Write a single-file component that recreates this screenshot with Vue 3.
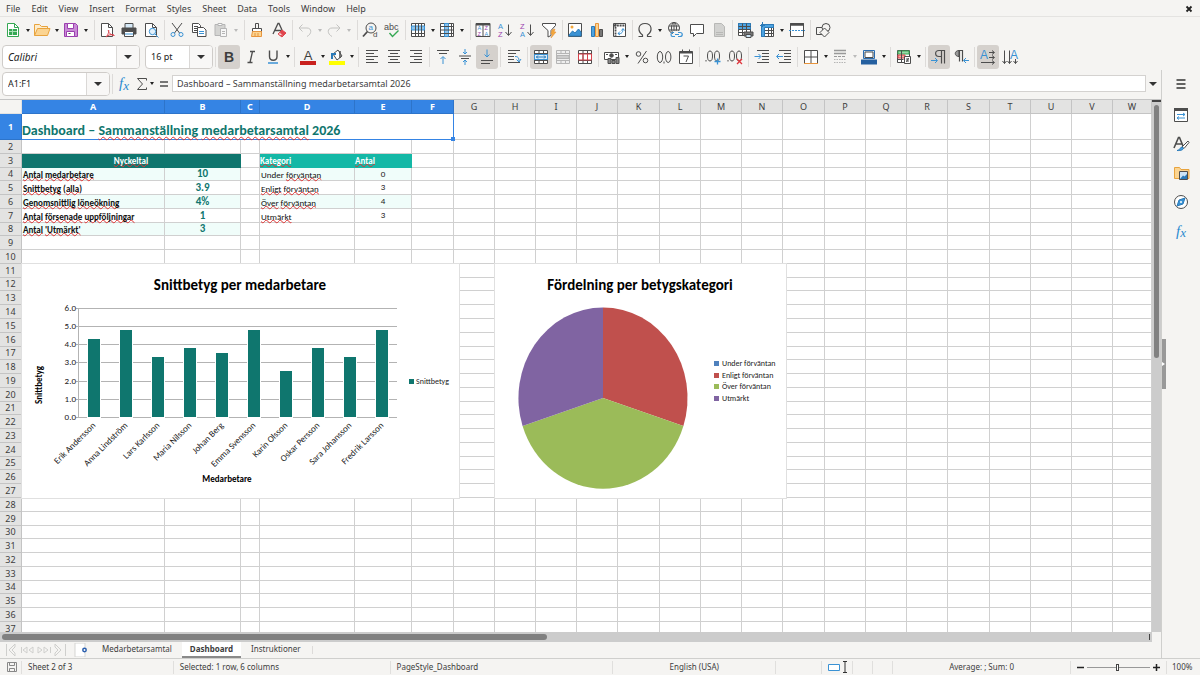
<script setup>
const menus = ['File', 'Edit', 'View', 'Insert', 'Format', 'Styles', 'Sheet', 'Data', 'Tools', 'Window', 'Help']

const art = {
  new: '<path d="M3.500 2.500h7l4 4v9h-11z" fill="#fff" stroke="#35a853"/><path d="M10.500 2.500v4h4" stroke="#35a853"/><path d="M5 8h8v6H5z" fill="#35a853" stroke="none"/><path d="M5 10.500h8M8.500 8v6" stroke="#a9dfb6"/>',
  open: '<path d="M1.500 14.500v-11h5l2 2h6v3" fill="#fdeccb" stroke="#e8a33d"/><path d="M1.500 14.500l3-7h12.500l-2.500 7z" fill="#fbd491" stroke="#e8a33d"/>',
  save: '<path d="M2.500 2.500h11l2 2v11h-13z" fill="#c98bd6" stroke="#9b3fae"/><path d="M5.500 2.500h6v5h-6zM4.500 10.500h8v5h-8z" fill="#fff" stroke="#9b3fae"/><path d="M6.500 12.500h2"/>',
  pdf: '<path d="M3.500 2.500h7l4 4v9h-11z" fill="#fff"/><path d="M10.500 2.500v4h4"/><path d="M8 16c3-3 3-7 2.500-7s0 5 6 5.500M8 16c2-2 5-3 8-2" stroke="#d8404a"/>',
  print: '<path d="M5 2.500h8v5H5z" fill="#d6e9f7"/><path d="M2 7h14v6H2z" fill="#4d4d4d"/><path d="M4.500 10.500h9v5h-9z" fill="#fff"/><path d="M5 13h8" stroke="#3a92d4"/>',
  preview: '<path d="M3.500 2.500h7l4 4v9h-11z" fill="#fff"/><path d="M10.500 2.500v4h4"/><circle cx="10.500" cy="10.500" r="3.200" fill="#e3f1fb" stroke="#3a92d4"/><path d="M13 13l3.500 3.500" stroke="#3a92d4"/>',
  cut: '<path d="M4 2l7.500 10M14 2L6.500 12"/><circle cx="5" cy="13.500" r="2" stroke="#3a92d4"/><circle cx="13" cy="13.500" r="2" stroke="#3a92d4"/>',
  copy: '<path d="M2.500 2.500h6l2 2v7h-8z" fill="#fff"/><path d="M4 5.500h4M4 7.500h3M4 9.500h3"/><path d="M7.500 6.500h6l2.500 2.500v6.500H7.500z" fill="#fff"/><path d="M9 10.500h5M9 12.500h5" stroke="#3a92d4"/>',
  paste: '<path d="M3 3.500h10v11H3z" fill="#d4d4d2" stroke="#b5b5b5"/><path d="M6 2.500h4v2H6z" fill="#fff" stroke="#b5b5b5"/><path d="M8.500 7.500h6v8h-6z" fill="#f7f7f7" stroke="#b5b5b5"/><path d="M10 10.500h3M10 12.500h3" stroke="#b5b5b5"/>',
  clone: '<path d="M7.500 2.500h3v5h-3z"/><path d="M4.500 7.500h9v3h-9z" fill="#fff"/><path d="M4.500 10.500l-1 5h10v-5z" fill="#fbd491" stroke="#e8953d"/><path d="M7 12v3M10 12v3" stroke="#e8953d"/>',
  clear: '<path d="M3 13L8 2.500h1L12 9M5 9.500h6" stroke-width="1.300"/><path d="M8 13l4-4 4 3-4 4z" fill="#e0454d" stroke="#e0454d"/><path d="M8 13l2-1.500 3 3" fill="#fff" stroke="#e0454d"/>',
  undo: '<path d="M6.500 3.500L3 7l3.500 3.500M3 7h8c5 0 5 6 0 8.500" stroke="#c3c3c1"/>',
  redo: '<path d="M11.500 3.500L15 7l-3.500 3.500M15 7H7c-5 0-5 6 0 8.500" stroke="#c3c3c1"/>',
  find: '<circle cx="10" cy="7" r="5"/><path d="M6.500 10.500L2 15.500" stroke-width="1.800"/><text x="7.500" y="9" font-size="8" fill="#3a92d4">a</text><text x="12" y="16" font-size="8" fill="#4d4d4d">d</text>',
  spell: '<text x="1" y="8.500" font-size="9" fill="#4d4d4d">abc</text><path d="M6.500 12l3 3.500 6-6" stroke="#35a853" stroke-width="1.400"/>',
  row: '<path d="M2.500 2.500h13v13h-13z" fill="#fff"/><path d="M2.500 5h13v4h-13z" fill="#8cc4ee" stroke="#3a92d4"/><path d="M2.500 12.500h13M6.500 2.500v13M9.500 2.500v13M12.500 2.500v13"/>',
  col: '<path d="M2.500 2.500h13v13h-13z" fill="#fff"/><path d="M6.500 2.500h4v13h-4z" fill="#8cc4ee" stroke="#3a92d4"/><path d="M2.500 5.500h13M2.500 9h13M2.500 12.500h13M13.500 2.500v13"/>',
  sort: '<path d="M2 2.500h14v13H2zM9 4v12" fill="#fff"/><path d="M2 3.500h14" stroke-width="2"/><g font-size="5.500" stroke="none"><text x="3.500" y="9" fill="#3a92d4">A</text><text x="3.500" y="15" fill="#9b3fae">Z</text><text x="10.500" y="9" fill="#9b3fae">Z</text><text x="10.500" y="15" fill="#3a92d4">A</text></g>',
  az: '<g font-size="7.500" stroke="none"><text x="2" y="7.500" fill="#3a92d4">A</text><text x="2" y="16" fill="#9b3fae">Z</text></g><path d="M12.500 3.500v10.500M9.500 11l3 3.500 3-3.500"/>',
  za: '<g font-size="7.500" stroke="none"><text x="2" y="7.500" fill="#9b3fae">Z</text><text x="2" y="16" fill="#3a92d4">A</text></g><path d="M12.500 3.500v10.500M9.500 11l3 3.500 3-3.500"/>',
  filter: '<path d="M2.500 2.500h13v2L11 9.500v5l-3 1.500V9.500l-5.500-5z" fill="#fff"/><path d="M12 9l3-1-1 3h2l-5 6 1.500-4H11z" fill="#f3a83c" stroke="#e8953d" stroke-width=".6"/>',
  image: '<path d="M2.500 2.500h13v13h-13z" fill="#fff"/><circle cx="6" cy="6" r="1.500" fill="#f3a83c" stroke="none"/><path d="M3 14l3.500-4 2.500 2 3.500-4 2.500 3v4H3z" fill="#3a92d4" stroke="#2b7ab8"/>',
  chart: '<path d="M3.500 5.500h3v10h-3z" fill="#4ea3e0" stroke="#2b7ab8"/><path d="M7.500 2.500h3v13h-3z" fill="#fbd491" stroke="#e8953d"/><path d="M11.500 8.500h3v7h-3z" fill="#777"/>',
  pivot: '<path d="M3.500 2.500h12v13h-12z" fill="#fff"/><path d="M4 4.500h11M5.500 3v12" stroke-width="1.800" stroke-dasharray="2 .8"/><path d="M8 12.500c4 1 5-2 5-4.500M10 10.500l-2 2 2 1.500M11.500 9.500L13 7.500l1.500 2" stroke="#3a92d4"/>',
  omega: '<path d="M2.500 15.500h4v-1.500C1 10 2 2.500 9 2.500S17 10 11.500 14v1.500h4" stroke-width="1.200"/>',
  link: '<circle cx="8" cy="7" r="5.500"/><ellipse cx="8" cy="7" rx="2.500" ry="5.500"/><path d="M3 5h10M3 9h10M8 2v10"/><path d="M7 10h9v7H7z" fill="#f5f4f2" stroke="none"/><path d="M8 11.500H6.500c-2 0-2 4 0 4H9M12 11.500h2c3 0 3 4 0 4h-2M9 13.500h4" stroke="#3a92d4" stroke-width="1.200"/>',
  comment: '<path d="M2.500 3.500h13v9h-7l-3 3v-3h-3z" fill="#fff"/>',
  header: '<path d="M4.500 2.500h7l3 3v10h-10z" fill="#d2d2d0" stroke="#b8b8b6"/><path d="M6 11.500h7M6 13.500h7" stroke="#b8b8b6"/>',
  prange: '<path d="M2.500 2.500h12v12h-12z" fill="#fff"/><path d="M2.500 2.500h12v6h-12z" fill="#4ea3e0" stroke="#2b7ab8"/><path d="M2.500 5.500h12M2.500 8.500h12M2.500 11.500h12M6.500 2.500v12M10.500 2.500v12"/><path d="M8 11h9v4H8z" fill="#777"/><path d="M10 13.500h5v3h-5z" fill="#cde4f5"/>',
  freeze: '<path d="M3.500 3.500h12v12h-12z" fill="#fff"/><path d="M3.500 6.500v9h3v-9h9v-3h-12z" fill="#4ea3e0" stroke="#2b7ab8"/><path d="M7 9.500h8M7 12.500h8M10.500 7v8M13.500 7v8"/><path d="M4.500 1v5M2 4.500h5" stroke="#2b7ab8"/>',
  split: '<path d="M2.500 2.500h13v13h-13z" fill="#fff"/><path d="M2 3.500h14" stroke-width="2.500"/><path d="M1 9.500h16" stroke="#3a92d4" stroke-dasharray="2 1"/>',
  shapes: '<path d="M2.500 6.500h7v7h-7z" fill="#f5f4f2"/><circle cx="12" cy="6.500" r="4" fill="#f5f4f2"/><path d="M10.500 7l4.500 4.500-4.500 4.500L6 11.500z" fill="#f5f4f2"/>',
  bold: '<text x="9" y="14" font-size="14" font-weight="700" text-anchor="middle" fill="#3d3d3d">B</text>',
  italic: '<path d="M8 3.500h5M5.500 14.500h5M10.500 3.500L8 14.500" stroke-width="1.300"/>',
  underline: '<path d="M5.500 2.500v6c0 5 7.500 5 7.500 0v-6" stroke-width="1.400"/><path d="M4 15h10" stroke="#3a92d4" stroke-width="1.500"/>',
  color: '<text x="9" y="12" font-size="13" text-anchor="middle" fill="#3d3d3d">A</text><path d="M1 15h16" stroke="#c9211e" stroke-width="4"/>',
  fillc: '<path d="M5 6l5-4 4 6-5 4z" fill="#fff"/><path d="M4 11V6h4" stroke="#2b7ab8" stroke-width="2"/><path d="M12 3v7" stroke-width="1.500"/><path d="M1 15h16" stroke="#ffff00" stroke-width="4"/>',
  left: '<path d="M3 2.500h12M3 5.500h8M3 8.500h12M3 11.500h8M3 14.500h12" />',
  center: '<path d="M3 2.500h12M5 5.500h8M3 8.500h12M5 11.500h8M3 14.500h12"/>',
  right: '<path d="M3 2.500h12M7 5.500h8M3 8.500h12M7 11.500h8M3 14.500h12"/>',
  top: '<path d="M3 2.500h12M5 5.500h8"/><path d="M9 16V9M6.500 11L9 8.500l2.500 2.500" stroke="#3a92d4"/>',
  middle: '<path d="M3 8h12M5 10.500h8"/><path d="M9 1v5M7 4l2 2 2-2M9 17v-5M7 14l2-2 2 2" stroke="#3a92d4"/>',
  bottom: '<path d="M3 12.500h12M3 15.500h9"/><path d="M9 1.500v7M6.500 6.500L9 9l2.500-2.500" stroke="#3a92d4"/>',
  wrap: '<path d="M3 2.500h12M3 5.500h8M3 8.500h6M3 11.500h6M3 14.500h12"/><path d="M10 8.500c3 0 4 1 4 5M11.500 11.500l2.500 2.500 2-3" stroke="#3a92d4"/>',
  merge: '<path d="M2.500 2.500h13v13h-13z" fill="#fff"/><path d="M2.500 5.500h13M2.500 12.500h13M7 2.500v3M11.500 2.500v3M7 12.500v3M11.500 12.500v3"/><path d="M2.500 6.500h13v5h-13z" fill="#d9ecfa" stroke="#3a92d4"/><path d="M4 9h10M6 7.500L4.500 9 6 10.500M12 7.500L13.500 9 12 10.500" stroke="#2b7ab8"/>',
  unmerge: '<path d="M2.500 2.500h13v13h-13z" fill="#eee" stroke="#b5b5b5"/><path d="M2.500 5.500h13M2.500 12.500h13M7 2.500v3M11.500 2.500v3M7 12.500v3M11.500 12.500v3" stroke="#b5b5b5"/><path d="M3 7.500h12v3H3z" fill="#ccc" stroke="#b5b5b5"/>',
  split2: '<path d="M2.500 2.500h13v13h-13z" fill="#fff"/><path d="M2.500 5.500h13M2.500 12.500h13M7 2.500v13M11.500 2.500v13"/><path d="M2.500 6h13v6h-13zM7 6v6M11.500 6v6" stroke="#d8404a"/>',
  money: '<path d="M1.500 4.500h14v7h-14z" fill="#fff"/><circle cx="8.500" cy="7.500" r="1.800" fill="#4d4d4d"/><path d="M3 6.500h2M12 6.500h2"/><path d="M5 10.500h3v5H5zM9 12.500h3v3H9zM13 9.500h3v6h-3z" fill="#888"/>',
  percent: '<circle cx="5.500" cy="6" r="2.300"/><circle cx="12.500" cy="12.500" r="2.300"/><path d="M13.500 3L5 15.500"/>',
  number: '<ellipse cx="5" cy="9" rx="2.700" ry="5.500"/><ellipse cx="13.200" cy="9" rx="2.700" ry="5.500"/><path d="M9 13.500v2"/>',
  date: '<path d="M2.500 3.500h13v12h-13z" fill="#fff"/><path d="M2.500 4.500h13" stroke-width="2"/><path d="M5.500 1.500v3M12.500 1.500v3M6.500 8h5l-2.500 6"/>',
  addd: '<ellipse cx="6" cy="8" rx="2.500" ry="5"/><ellipse cx="13" cy="8" rx="2.500" ry="5"/><path d="M2 12v1.500"/><path d="M13.500 10.500v6M10.500 13.500h6" stroke="#3a92d4" stroke-width="1.300"/>',
  deld: '<ellipse cx="6" cy="8" rx="2.500" ry="5"/><ellipse cx="13" cy="8" rx="2.500" ry="5"/><path d="M2 12v1.500"/><path d="M11 11l5 5M16 11l-5 5" stroke="#e0353d" stroke-width="1.300"/>',
  indent: '<path d="M4 2.500h12M9 5.500h7M9 8.500h7M9 11.500h7M4 14.500h12"/><path d="M1.500 8.500h6M5.500 6l2.500 2.500L5.500 11" stroke="#3a92d4"/>',
  outdent: '<path d="M4 2.500h12M9 5.500h7M9 8.500h7M9 11.500h7M4 14.500h12"/><path d="M2 8.500h6M4 6L1.500 8.500 4 11" stroke="#3a92d4"/>',
  border: '<path d="M2.500 2.500h13v13h-13z" fill="#fff"/><path d="M9 2.500v13M2.500 9h13"/><path d="M2 15.500h14" stroke="#e8953d"/>',
  bstyle: '<path d="M3 2.500h12M3 5.500h12" stroke="#999" stroke-width="1.500"/><path d="M3 8.500h12" stroke="#999" stroke-dasharray="3 1"/><path d="M3 11.500h12M3 14.500h12" stroke="#b5b5b5" stroke-dasharray="1.500 1"/>',
  bcolor: '<path d="M3.500 2.500h11v8h-11z" fill="#d9ecfa" stroke="#2b6cb0"/><path d="M5 4h8v5.500H5z" fill="#fff"/><path d="M1 14h16" stroke="#2560a0" stroke-width="5"/>',
  cond: '<path d="M2.500 2.500h12v12h-12z" fill="#fff"/><path d="M3 3h11v3H3z" fill="#9bd8a9" stroke="#35a853"/><path d="M3 7h7v3H3z" fill="#f5a9a0" stroke="#d8404a"/><path d="M6.500 2.500v12M2.500 11.500h6"/><path d="M9.500 8.500h6v7h-6z" fill="#fff"/><path d="M11 11h3M11 13h3M13.500 10l-2 4"/>',
  ltr: '<path d="M14.500 15.500v-13H9c-4.500 0-4.500 6 0 6h2M11.500 2.500v13" stroke-width="1.200"/><path d="M1 12.500h6M5 10l2.500 2.500L5 15" stroke="#3a92d4"/>',
  rtl: '<path d="M7 2.500c-5 0-5 6 0 6z" fill="#999"/><path d="M10.500 13.500v-11H7M7.500 2.500v11" stroke-width="1.200"/><path d="M17 12.500h-5M14 10l-2.500 2.500L14 15" stroke="#3a92d4"/>',
  hdir: '<text x="1" y="11" font-size="12" fill="#3a92d4">A</text><path d="M10 4.500h5M10 9.500h5M2 14.500h13M13 2.500l2.500 2-2.500 2M13 7.500l2.500 2-2.500 2M13 12.500l2.500 2-2.500 2"/>',
  vdir: '<text x="9" y="11" font-size="12" fill="#3a92d4">A</text><path d="M3.500 2.500v13M8.500 2.500v13M14.500 11v4.500M1.500 13l2 2.500 2-2.500M6.500 13l2 2.500 2-2.500M12.500 13l2 2.500 2-2.500"/>',
  props: '<path d="M2.500 2.500h13v13h-13z" fill="#fff"/><path d="M2 3.500h14" stroke-width="3"/><path d="M5 8.500h8M5 12h8M11 7l2 1.500-2 1.500M7 10.500L5 12l2 1.500" stroke="#3a92d4"/>',
  styles: '<path d="M2 13L6.500 2.500h1L11 11M4 9h6" stroke-width="1.600"/><path d="M10 12l6-6 1 1.500-5 6z" fill="#fff"/><path d="M5 15.500c3 0 3-3.500 5-3.500 3 1 1 4-5 3.500z" fill="#4ea3e0" stroke="#2b7ab8"/>',
  gallery: '<path d="M2.500 14.500v-11h5l1.500 2h8v9z" fill="#fbd491" stroke="#e8a33d"/><path d="M7.500 7.500h8v8h-8z" fill="#cde4f5"/><path d="M8 15l3-3.500 1.500 1L15 10v5z" fill="#2b7ab8" stroke="none"/>',
  navigator: '<circle cx="9" cy="9" r="6.500" fill="#fff"/><path d="M13 5l-2 6-6 2 2-6z" fill="#3a92d4" stroke="#2b7ab8"/><circle cx="9" cy="9" r="1" fill="#fff" stroke="none"/>'
}

const b = (icon, label, extra = {}) => ({ icon, label, ...extra })
const dd = (icon, label, extra = {}) => ({ icon, label, drop: true, ...extra })
const sep = { sep: true }

const standard = [
  dd('new', 'New'), dd('open', 'Open'), dd('save', 'Save'), sep,
  b('pdf', 'Export as PDF'), b('print', 'Print'), b('preview', 'Print Preview'), sep,
  b('cut', 'Cut'), b('copy', 'Copy'), dd('paste', 'Paste', { off: true }), sep,
  b('clone', 'Clone Formatting'), b('clear', 'Clear Formatting'), sep,
  dd('undo', 'Undo', { off: true }), dd('redo', 'Redo', { off: true }), sep,
  b('find', 'Find and Replace'), b('spell', 'Spelling'), sep,
  dd('row', 'Row'), dd('col', 'Column'), sep,
  b('sort', 'Sort'), b('az', 'Sort Ascending'), b('za', 'Sort Descending'), b('filter', 'AutoFilter'), sep,
  b('image', 'Insert Image'), b('chart', 'Insert Chart'), b('pivot', 'Pivot Table'), sep,
  dd('omega', 'Special Character'), b('link', 'Hyperlink'), b('comment', 'Comment'), b('header', 'Headers and Footers', { off: true }), sep,
  b('prange', 'Print Area'), dd('freeze', 'Freeze Rows and Columns'), b('split', 'Split Window'), sep,
  b('shapes', 'Draw Functions')
]
const formatting = [
  sep, b('bold', 'Bold', { on: true }), b('italic', 'Italic'), dd('underline', 'Underline'), sep,
  dd('color', 'Font Color'), dd('fillc', 'Background Color'), sep,
  b('left', 'Align Left'), b('center', 'Center Horizontally'), b('right', 'Align Right'), sep,
  b('top', 'Align Top'), b('middle', 'Center Vertically'), b('bottom', 'Align Bottom', { on: true }), sep,
  b('wrap', 'Wrap Text'), sep,
  b('merge', 'Merge and Center', { on: true }), b('unmerge', 'Merge Cells', { off: true }), b('split2', 'Unmerge Cells'), sep,
  dd('money', 'Currency'), b('percent', 'Percent'), b('number', 'Number'), b('date', 'Date'), sep,
  b('addd', 'Add Decimal Place'), b('deld', 'Delete Decimal Place'), sep,
  b('indent', 'Increase Indent'), b('outdent', 'Decrease Indent'), sep,
  dd('border', 'Borders'), dd('bstyle', 'Border Style', { off: true }), dd('bcolor', 'Border Color'), sep,
  dd('cond', 'Conditional'), sep,
  b('ltr', 'Left-To-Right', { on: true }), b('rtl', 'Right-To-Left'), sep,
  b('hdir', 'Text from Left to Right', { on: true }), b('vdir', 'Text from Top to Bottom')
]
const panels = [['props', 'Properties'], ['styles', 'Styles'], ['gallery', 'Gallery'], ['navigator', 'Navigator']]

const widths = [143, 76, 19, 95, 57, 42, 41, 41, 41, 41, 42, 41, 41, 41, 42, 41, 41, 41, 42, 41, 41, 41]
const letters = 'ABCDEFGHIJKLMNOPQRSTUVW'.split('')

const metrics = [
  { words: [['Antal', 1], ['medarbetare', 1]], value: '10' },
  { words: [['Snittbetyg', 1], ['(', 0], ['alla', 1], [')', 0]], value: '3.9' },
  { words: [['Genomsnittlig', 1], ['löneökning', 1]], value: '4%' },
  { words: [['Antal', 1], ['försenade', 1], ['uppföljningar', 1]], value: '1' },
  { words: [['Antal', 1], ["'Utmärkt'", 1]], value: '3' }
]
const categories = [
  { words: [['Under', 0], ['förväntan', 1]], value: '0' },
  { words: [['Enligt', 1], ['förväntan', 1]], value: '3' },
  { words: [['Över', 1], ['förväntan', 1]], value: '4' },
  { words: [['Utmärkt', 1]], value: '3' }
]

const rowEnd = n => Math.round(140 + 13.77 * (n - 1))
const rows = Array.from({ length: 36 }, (_, i) => {
  const n = i + 2
  const cells = []
  let start = 0
  if (n === 3) {
    cells.push({ k: 'a', span: 2, cls: 'dark', words: [['Nyckeltal', 1]] }, { k: 'c' })
    cells.push({ k: 'd', cls: 'light', words: [['Kategori', 1]] }, { k: 'e', cls: 'light', words: [['Antal', 1]] })
    start = 5
  } else if (n >= 4 && n <= 8) {
    const m = metrics[n - 4]
    const c = categories[n - 4]
    const tint = n % 2 === 0 ? ' tint' : ''
    cells.push({ k: 'a', cls: 'label' + tint, words: m.words }, { k: 'b', cls: 'figure' + tint, text: m.value }, { k: 'c' })
    cells.push(c ? { k: 'd', cls: 'plain' + tint, words: c.words } : { k: 'd' })
    cells.push(c ? { k: 'e', cls: 'count' + tint, text: c.value } : { k: 'e' })
    start = 5
  }
  for (let j = start; j < 23; j++) cells.push({ k: letters[j] })
  return { n, h: rowEnd(n) - rowEnd(n - 1), cells }
})

const people = [
  ['Erik Andersson', 4.3], ['Anna Lindström', 4.8], ['Lars Karlsson', 3.3], ['Maria Nilsson', 3.8], ['Johan Berg', 3.5],
  ['Emma Svensson', 4.8], ['Karin Olsson', 2.5], ['Oskar Persson', 3.8], ['Sara Johansson', 3.3], ['Fredrik Larsson', 4.8]
].map(([name, v], i) => ({ name, h: Math.round(v * 18.2), x: Math.round(72.4 + i * 31.9) }))
const ticks = [0, 1, 2, 3, 4, 5, 6].map(v => ({ label: v.toFixed(1), y: 153 - Math.round(v * 18.2) }))

const pieData = [['Under förväntan', 0, '#4f81bd'], ['Enligt förväntan', 3, '#c0504d'], ['Över förväntan', 4, '#9bbb59'], ['Utmärkt', 3, '#8064a2']]
let turned = 0
const slices = pieData.map(([label, v, color], i) => {
  const pt = t => `${(108 + 84.5 * Math.sin(t * 2 * Math.PI)).toFixed(1)} ${(134 - 90.5 * Math.cos(t * 2 * Math.PI)).toFixed(1)}`
  const from = turned
  turned += v / 10
  return { label, color, v, y: 99 + Math.round(i * 11.7), d: `M108 134L${pt(from)}A84.5 90.5 0 0 1 ${pt(turned)}z` }
})
</script>

<template>
  <div class="app">
    <nav class="menubar">
      <button v-for="m in menus" :key="m" type="button">{{ m }}</button>
      <button type="button" class="close" aria-label="Close document">
        <svg width="8" height="8" viewBox="0 0 8 8"><path d="M1.500 1.500l5 5M6.500 1.500l-5 5" stroke="#222" stroke-width="1.800" /></svg>
      </button>
    </nav>

    <div class="toolbar standard">
      <template v-for="(t, i) in standard" :key="i">
        <span v-if="t.sep" class="sep"></span>
        <span v-else-if="t.drop" class="split">
          <button type="button" class="tb" :aria-label="t.label"><svg class="ico" viewBox="0 0 18 18" v-html="art[t.icon]"></svg></button>
          <button type="button" class="arrow" :class="{ off: t.off }" :aria-label="t.label + ' options'"></button>
        </span>
        <button v-else type="button" class="tb" :aria-label="t.label"><svg class="ico" viewBox="0 0 18 18" v-html="art[t.icon]"></svg></button>
      </template>
    </div>

    <div class="toolbar formatting">
      <div class="combo font">
        <input type="text" value="Calibri" aria-label="Font name" />
        <button type="button" aria-label="Font list"></button>
      </div>
      <div class="combo size">
        <input type="text" value="16 pt" aria-label="Font size" />
        <button type="button" aria-label="Size list"></button>
      </div>
      <template v-for="(t, i) in formatting" :key="i">
        <span v-if="t.sep" class="sep"></span>
        <span v-else-if="t.drop" class="split">
          <button type="button" class="tb" :aria-label="t.label"><svg class="ico" viewBox="0 0 18 18" v-html="art[t.icon]"></svg></button>
          <button type="button" class="arrow" :class="{ off: t.off }" :aria-label="t.label + ' options'"></button>
        </span>
        <button v-else type="button" class="tb" :class="{ on: t.on }" :aria-label="t.label"><svg class="ico" viewBox="0 0 18 18" v-html="art[t.icon]"></svg></button>
      </template>
    </div>

    <div class="workspace">
      <main class="main">
        <div class="formula">
          <div class="combo namebox">
            <input type="text" value="A1:F1" aria-label="Name box" />
            <button type="button" aria-label="Name list"></button>
          </div>
          <span class="sep"></span>
          <button type="button" class="fx" aria-label="Function wizard">f<i>x</i></button>
          <button type="button" class="sigma" aria-label="Select function">
            <svg width="12" height="14" viewBox="0 0 12 14"><path d="M10.500 3.500v-2h-9l5 5.500-5 5.500h9v-2" /></svg>
          </button>
          <button type="button" class="arrow" aria-label="Function list"></button>
          <button type="button" class="equals" aria-label="Formula">
            <svg width="10" height="8" viewBox="0 0 10 8"><path d="M1 2h8M1 6h8" stroke-width="1.500" /></svg>
          </button>
          <input class="line" type="text" value="Dashboard – Sammanställning medarbetarsamtal 2026" aria-label="Input line" />
          <button type="button" class="expand" aria-label="Expand formula bar"></button>
        </div>

        <div class="sheetwrap">
          <div class="sheet">
            <table>
              <colgroup>
                <col class="rowhead" />
                <col v-for="(w, i) in widths" :key="i" :style="{ width: w + 'px' }" />
                <col />
              </colgroup>
              <thead>
                <tr>
                  <td class="corner"></td>
                  <th v-for="(l, i) in letters" :key="l" scope="col" :class="{ sel: i < 6 }">{{ l }}</th>
                </tr>
              </thead>
              <tbody>
                <tr class="first">
                  <th scope="row" class="sel">1</th>
                  <td colspan="6" class="title">Dashboard – <u>Sammanställning</u> <u>medarbetarsamtal</u> 2026<span class="handle"></span></td>
                  <td v-for="l in letters.slice(6)" :key="l"></td>
                </tr>
                <tr v-for="r in rows" :key="r.n" :style="{ height: r.h + 'px' }">
                  <th scope="row">{{ r.n }}</th>
                  <td v-for="c in r.cells" :key="c.k" :colspan="c.span" :class="c.cls">
                    <template v-if="c.words"><template v-for="(w, i) in c.words" :key="i"><template v-if="i && w[0] !== ')' && c.words[i - 1][0] !== '('">{{ ' ' }}</template><u v-if="w[1]">{{ w[0] }}</u><template v-else>{{ w[0] }}</template></template></template>
                    <template v-else>{{ c.text }}</template>
                  </td>
                </tr>
              </tbody>
            </table>

            <svg class="chart bars" viewBox="0 0 437 234" role="img" aria-label="Snittbetyg per medarbetare">
              <text class="ctitle" x="218" y="26" text-anchor="middle">Snittbetyg per medarbetare</text>
              <g v-for="t in ticks" :key="t.label">
                <path :d="`M54 ${t.y}.5H375`" stroke="#b3b3b3" />
                <text class="scale" x="54" :y="t.y + 3" text-anchor="end">{{ t.label }}</text>
              </g>
              <path d="M56.500 44v110" stroke="#b3b3b3" />
              <g v-for="p in people" :key="p.name">
                <rect :x="p.x - 7" :y="153 - p.h" width="14" :height="p.h + 1" fill="#fff" />
                <rect :x="p.x - 6" :y="153 - p.h" width="12" :height="p.h" fill="#0f766e" />
                <text class="scale" :transform="`translate(${p.x + 2} 162) rotate(-45)`" text-anchor="end">{{ p.name }}</text>
              </g>
              <text class="strong" transform="translate(20 121) rotate(-90)" text-anchor="middle">Snittbetyg</text>
              <text class="strong" x="205" y="218" text-anchor="middle">Medarbetare</text>
              <rect x="387" y="115" width="5" height="5" fill="#0f766e" />
              <text x="394" y="120">Snittbetyg</text>
            </svg>

            <svg class="chart pie" viewBox="0 0 291 234" role="img" aria-label="Fördelning per betygskategori">
              <text class="ctitle" x="145" y="26" text-anchor="middle">Fördelning per betygskategori</text>
              <g v-for="s in slices" :key="s.label">
                <path v-if="s.v" :d="s.d" :fill="s.color" />
                <rect x="219" :y="s.y - 2" width="5" height="5" :fill="s.color" />
                <text x="227" :y="s.y + 3">{{ s.label }}</text>
              </g>
            </svg>
          </div>
          <div class="vscroll"><span></span></div>
        </div>

        <div class="hscroll"><span class="thumb"></span><span class="tick"></span></div>

        <div class="tabs">
          <svg class="nav" width="62" height="14" viewBox="0 0 62 14"><path d="M1.500 1v12M10 1L4 7l6 6v-3L7 7l3-3zM22 4l-4 3 4 3zM28 4l-4 3 4 3zM16.500 4v6M33 4l4 3-4 3zM39 4l4 3-4 3zM45.500 4v6M50 1l6 6-6 6v-3l3-3-3-3zM60.500 1v12" /></svg>
          <button type="button" class="add" aria-label="Add sheet">
            <svg width="14" height="14" viewBox="0 0 14 14"><path d="M1 0h10v14H1z" fill="#fff" stroke="#d5d5d3" /><circle cx="10.500" cy="7" r="1.700" fill="#fff" stroke="#2b5fae" stroke-width="1.500" /></svg>
          </button>
          <button type="button" class="tab">Medarbetarsamtal</button>
          <button type="button" class="tab current">Dashboard</button>
          <button type="button" class="tab">Instruktioner</button>
          <span class="sep"></span>
        </div>
      </main>

      <aside class="sidebar">
        <button type="button" aria-label="Sidebar settings">
          <svg width="12" height="10" viewBox="0 0 12 10"><path d="M1.500 1h9M1.500 5h9M1.500 9h9" stroke="#333" stroke-width="1.500" /></svg>
        </button>
        <button v-for="p in panels" :key="p[0]" type="button" :aria-label="p[1]"><svg class="ico" viewBox="0 0 18 18" v-html="art[p[0]]"></svg></button>
        <button type="button" class="fx" aria-label="Functions">f<i>x</i></button>
        <span class="collapse"></span>
      </aside>
    </div>

    <footer class="status">
      <span><svg width="12" height="12" viewBox="0 0 12 12"><path d="M1.500 1.500h9v9h-9zM3.500 1.500v3h5v-3M3.500 10.500v-3h5v3" stroke="#888" /></svg></span>
      <span>Sheet 2 of 3</span>
      <span>Selected: 1 row, 6 columns</span>
      <span>PageStyle_Dashboard</span>
      <span class="mid">English (USA)</span>
      <span></span>
      <span><svg width="22" height="12" viewBox="0 0 22 12"><path d="M.5 3.500h11v6H.5z" stroke="#3a92d4" fill="#fff" /><path d="M15 .5h4M15 11.500h4M17 .5v11" stroke="#333" /></svg></span>
      <span></span>
      <span></span>
      <span class="mid">Average: ; Sum: 0</span>
      <span class="zoom">
        <button type="button" aria-label="Zoom out"><svg width="7" height="7" viewBox="0 0 7 7"><path d="M0 3.500h7" stroke="#222" stroke-width="1.500" /></svg></button>
        <input type="range" min="0" max="100" value="49" aria-label="Zoom" />
        <button type="button" aria-label="Zoom in"><svg width="7" height="7" viewBox="0 0 7 7"><path d="M0 3.500h7M3.500 0v7" stroke="#222" stroke-width="1.500" /></svg></button>
      </span>
      <span class="pct">100%</span>
    </footer>
  </div>
</template>

<style>
html, body { background: #f5f4f2; }
</style>

<style scoped>
* { box-sizing: border-box; }
.app { height: 100vh; display: flex; flex-direction: column; overflow: hidden; background: #f5f4f2; color: #3d3d3d; font: 9px/12px "Noto Sans", sans-serif; }
button { border: 0; padding: 0; margin: 0; background: none; color: inherit; font: inherit; }
input { font: inherit; color: inherit; min-width: 0; margin: 0; }
svg { fill: none; stroke: #4d4d4d; display: block; flex: none; }
.ico :deep(text) { stroke: none; font-family: "Liberation Sans", sans-serif; }

.menubar { display: flex; height: 17px; flex: none; align-items: center; padding: 1px 7px 0 0; border-bottom: 1px solid #e4e3e1; }
.menubar button { padding: 0 5px 0 6px; }
.menubar .close { margin-left: auto; padding: 0; }

.toolbar { display: flex; flex: none; height: 26px; align-items: center; padding-left: 2px; }
.formatting { height: 27px; }
.tb { width: 22px; height: 24px; display: flex; align-items: center; justify-content: center; border-radius: 3px; flex: none; }
.tb.on { background: #d5d1cd; }
.ico { width: 18px; height: 18px; }
.split { display: flex; flex: none; align-items: center; }
.arrow { width: 7px; height: 24px; display: flex; align-items: center; justify-content: center; flex: none; }
.arrow::before { content: ""; border: 2px solid transparent; border-top: 3px solid #222; border-bottom: 0; }
.arrow.off::before { border-top-color: #bbb; }
.sep { width: 1px; height: 20px; margin: 0 1px 0 2px; background: #dddbd9; flex: none; }
.formatting .sep { margin-right: 2px; }
.split + .sep { margin-left: 5px; }
.formatting .split + .sep { margin-left: 3px; }
.split + .tb { margin-left: 1px; }

.combo { display: flex; height: 24px; border: 1px solid #cfccc9; border-radius: 4px; background: #fff; overflow: hidden; flex: none; color: #222; }
.combo input { flex: 1; border: 0; padding: 0 5px; background: none; outline: 0; }
.combo button { width: 23px; border-left: 1px solid #dad8d6; background: #f8f7f6; display: flex; align-items: center; justify-content: center; }
.combo button::before, .expand::before { content: ""; border: 4px solid transparent; border-top: 4px solid #333; border-bottom: 0; }
.font { width: 138px; font-size: 10px; font-style: italic; margin-right: 5px; }
.size { width: 68px; }

.workspace { flex: 1; display: flex; min-height: 0; }
.main { flex: 1; min-width: 0; display: flex; flex-direction: column; }
.formula { height: 30px; flex: none; display: flex; align-items: center; padding: 0 2px 2px 2px; border-bottom: 1px solid #c4c4c4; }
.namebox { width: 108px; }
.fx { font: italic 15px/18px "Liberation Serif", serif; color: #2a8ad0; }
.fx i { font-size: 13px; position: relative; top: 2px; }
.formula .fx { width: 20px; }
.sigma { margin-left: 2px; }
.equals { margin: 0 3px 0 4px; }
.line { flex: 1; height: 17px; border: 1px solid #d4d2d0; padding: 0 4px; background: #fff; outline: 0; }
.expand { width: 13px; display: flex; justify-content: center; }

.sheetwrap { flex: 1; min-height: 0; display: flex; }
.sheet { flex: 1; min-width: 0; position: relative; overflow: hidden; background: #fff; }
table { width: 100%; table-layout: fixed; border-collapse: separate; border-spacing: 0; }
.rowhead { width: 22px; }
td, th { padding: 0; height: 13px; border-right: 1px solid #d0d0d0; border-bottom: 1px solid #d0d0d0; white-space: nowrap; line-height: 12px; }
th { font-weight: 400; background: #e3e3e2; border-color: #c4c4c4; text-align: center; }
thead tr { height: 14px; }
.corner { background: #f5f4f2; border-color: #e3e3e2; }
th.sel { background: #3584e4; color: #fff; font-weight: 700; border-color: #2d74ca; }
.first { height: 26px; }
u { text-decoration: underline wavy #d33 1px; text-underline-offset: -1px; text-decoration-skip-ink: none; }
td { font-family: Carlito, Lato, sans-serif; font-size: 9px; color: #222; }
.title { position: relative; border-right: 1px solid #3584e4; border-bottom: 1px solid #3584e4; color: #0f766e; font-size: 14px; font-weight: 700; line-height: 16px; vertical-align: bottom; }
.title u { text-underline-offset: 1px; }
.handle { position: absolute; right: -2px; bottom: -2px; width: 4px; height: 4px; background: #3584e4; }
.dark, .light { color: #fff; font-weight: 700; border-color: #0f766e; background: #0f766e; text-align: center; }
.light { background: #14b8a6; border-color: #14b8a6; text-align: left; }
.label, .plain { padding-left: 1px; vertical-align: bottom; line-height: 10px; color: #111; }
.label { font-weight: 700; }
.figure { text-align: center; font-size: 11px; font-weight: 700; color: #0f766e; }
.count { text-align: center; line-height: 11px; vertical-align: top; }
.tint { background: #f0fdfa; }

.chart { position: absolute; top: 164px; height: 234px; background: #fff; outline: 1px solid #e0e0e0; font: 8px Carlito, Lato, sans-serif; }
.chart text { fill: #222; stroke: none; }
.chart rect, .pie path { stroke: none; }
.chart .ctitle { font-size: 15px; font-weight: 700; fill: #000; }
.chart .scale { font-size: 9px; }
.chart .strong { font-size: 9px; font-weight: 700; fill: #000; }
.bars { left: 22px; width: 437px; }
.pie { left: 495px; width: 291px; }

.vscroll { width: 9px; flex: none; background: #ccc; border-top: 2px solid #444; padding: 3px 2px 0 2px; }
.vscroll span { display: block; height: 48%; border-radius: 3px; background: #808080; }
.hscroll { height: 10px; flex: none; margin-right: 9px; background: #ccc; padding: 2px; display: flex; justify-content: space-between; }
.hscroll .thumb { width: 47.500%; height: 6px; border-radius: 3px; background: #808080; }
.hscroll .tick { width: 1px; height: 6px; background: #444; }

.tabs { height: 16px; flex: none; display: flex; align-items: center; font-size: 8px; }
.nav { margin-left: 5px; stroke: #cfcfcd; }
.add { margin: 0 4px 0 7px; }
.tab { height: 16px; padding: 0 10px 2px 10px; }
.tab.current { background: #fff; font-weight: 700; padding: 0 8px; border-bottom: 2px solid #8a8a8a; }
.tabs .sep { height: 8px; }

.sidebar { width: 39px; flex: none; position: relative; border-left: 1px solid #cfcfcd; display: flex; flex-direction: column; align-items: center; padding-top: 5px; gap: 11px; }
.sidebar button { width: 20px; height: 18px; display: flex; align-items: center; justify-content: center; }
.sidebar button:first-child { margin-bottom: 2px; }
.collapse { position: absolute; left: 0; top: 269px; width: 4px; height: 50px; background: #999; display: flex; align-items: center; }
.collapse::before { content: ""; border: 2px solid transparent; border-left: 3px solid #fff; border-right: 0; }

.status { height: 17px; flex: none; border-top: 1px solid #cfcfcd; display: grid; grid-template-columns: 22px 152fr 217fr 223fr 163fr 46px 31px 20px 20px 178fr 96px 33px; align-items: center; font-size: 8px; }
.status > span { height: 13px; border-right: 1px solid #e0dfdd; display: flex; align-items: center; white-space: nowrap; padding-left: 6px; }
.status > .mid { justify-content: center; padding: 0; }
.status > .zoom { gap: 3px; padding: 0 6px; }
.status > .pct { border: 0; padding-left: 5px; }
.zoom input { flex: 1; appearance: none; height: 8px; background: linear-gradient(#999, #999) center / 100% 1px no-repeat; }
.zoom input::-webkit-slider-thumb { appearance: none; width: 3px; height: 7px; background: #fff; border: 1px solid #444; }
</style>
